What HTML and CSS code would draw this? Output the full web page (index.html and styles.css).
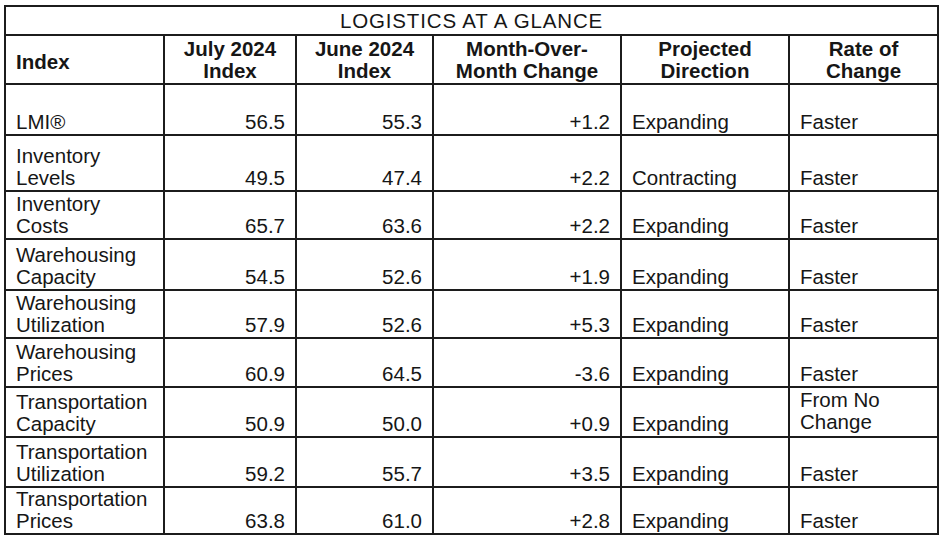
FILE: index.html
```html
<!DOCTYPE html>
<html lang="en">
<head>
<meta charset="utf-8">
<title>Logistics at a Glance</title>
<link rel="stylesheet" href="styles.css">
</head>
<body>
<table class="glance">
  <colgroup>
    <col class="c-index">
    <col class="c-jul">
    <col class="c-jun">
    <col class="c-mom">
    <col class="c-dir">
    <col class="c-rate">
  </colgroup>
  <tbody>
    <tr class="r-title"><td colspan="6" class="title">LOGISTICS AT A GLANCE</td></tr>
    <tr class="r-head">
      <th class="h-left">Index</th>
      <th>July 2024<br>Index</th>
      <th>June 2024<br>Index</th>
      <th>Month-Over-<br>Month Change</th>
      <th>Projected<br>Direction</th>
      <th>Rate of<br>Change</th>
    </tr>
    <tr class="r-51"><td>LMI®</td><td class="num">56.5</td><td class="num">55.3</td><td class="num">+1.2</td><td>Expanding</td><td>Faster</td></tr>
    <tr class="r-56"><td>Inventory<br>Levels</td><td class="num">49.5</td><td class="num">47.4</td><td class="num">+2.2</td><td>Contracting</td><td>Faster</td></tr>
    <tr class="r-48"><td>Inventory<br>Costs</td><td class="num">65.7</td><td class="num">63.6</td><td class="num">+2.2</td><td>Expanding</td><td>Faster</td></tr>
    <tr class="r-51"><td>Warehousing<br>Capacity</td><td class="num">54.5</td><td class="num">52.6</td><td class="num">+1.9</td><td>Expanding</td><td>Faster</td></tr>
    <tr class="r-48"><td>Warehousing<br>Utilization</td><td class="num">57.9</td><td class="num">52.6</td><td class="num">+5.3</td><td>Expanding</td><td>Faster</td></tr>
    <tr class="r-49"><td>Warehousing<br>Prices</td><td class="num">60.9</td><td class="num">64.5</td><td class="num">-3.6</td><td>Expanding</td><td>Faster</td></tr>
    <tr class="r-50"><td>Transportation<br>Capacity</td><td class="num">50.9</td><td class="num">50.0</td><td class="num">+0.9</td><td>Expanding</td><td class="rate2">From No<br>Change</td></tr>
    <tr class="r-50"><td>Transportation<br>Utilization</td><td class="num">59.2</td><td class="num">55.7</td><td class="num">+3.5</td><td>Expanding</td><td>Faster</td></tr>
    <tr class="r-47"><td>Transportation<br>Prices</td><td class="num">63.8</td><td class="num">61.0</td><td class="num">+2.8</td><td>Expanding</td><td>Faster</td></tr>
  </tbody>
</table>
</body>
</html>
```

FILE: styles.css
```css
html, body {
  margin: 0;
  padding: 0;
  background: #ffffff;
}

body {
  padding: 5px 0 0 4px;
  font-family: "Liberation Sans", Arial, sans-serif;
  color: #161616;
}

.glance {
  border-collapse: collapse;
  table-layout: fixed;
  width: 935px;
  font-size: 20.5px;
  line-height: 22px;
}

.c-index { width: 159px; }
.c-jul { width: 132px; }
.c-jun { width: 137px; }
.c-mom { width: 188px; }
.c-dir { width: 168px; }
.c-rate { width: 149px; }

.glance td,
.glance th {
  border: 2px solid #1c1c1c;
  padding: 0 9px 1px 10px;
  vertical-align: bottom;
  text-align: left;
  white-space: nowrap;
  overflow: hidden;
}

.glance th {
  font-weight: bold;
  text-align: center;
  padding: 0 4px 1px;
}

.glance th.h-left {
  text-align: left;
  vertical-align: middle;
  padding: 4px 10px 0;
}

.glance td.num {
  text-align: right;
  padding-right: 10px;
}

.glance td.title {
  text-align: center;
  vertical-align: middle;
  letter-spacing: 0.85px;
  padding: 0;
}

.glance td.rate2 {
  padding-bottom: 3px;
}

.r-title { height: 29px; }
.r-head { height: 49px; }
.r-51 { height: 51px; }
.r-56 { height: 56px; }
.r-48 { height: 48px; }
.r-49 { height: 49px; }
.r-50 { height: 50px; }
.r-47 { height: 47px; }
```
